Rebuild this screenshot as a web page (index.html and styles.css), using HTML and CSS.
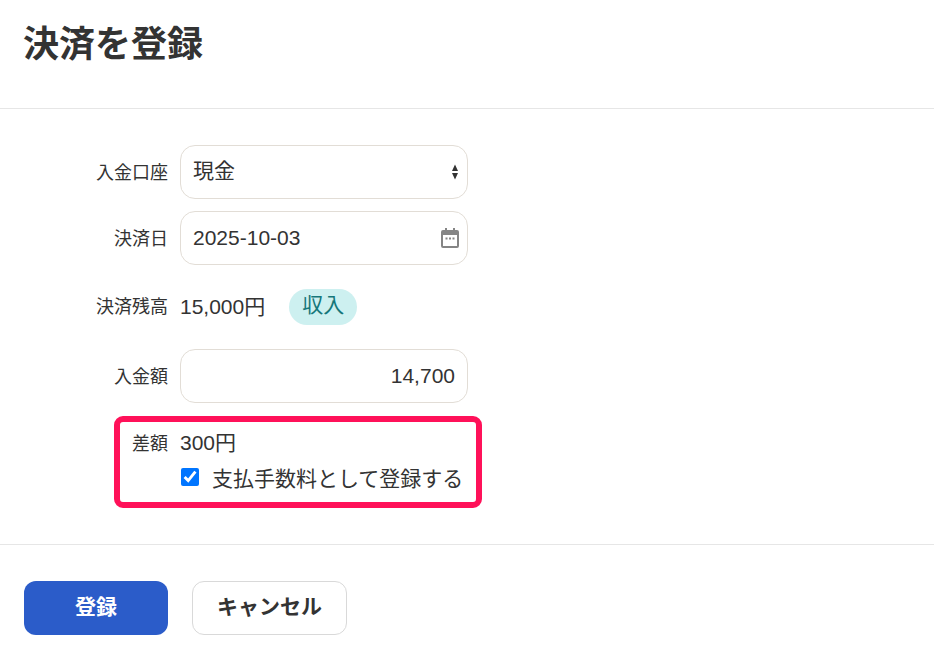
FILE: index.html
```html
<!DOCTYPE html>
<html lang="ja">
<head>
<meta charset="utf-8">
<title>決済を登録</title>
<link rel="stylesheet" href="styles.css">
</head>
<body>
<header class="head"><h1 class="title">決済を登録</h1></header>
<main class="body">
  <form class="form">
    <div class="row">
      <label class="label">入金口座</label>
      <div class="control">
        <select class="field select"><option>現金</option></select>
        <svg class="arrows" width="8" height="18" viewBox="0 0 8 18"><path d="M4 1.500 7 8H1zM1 10h6L4 16.500z" fill="#333"/></svg>
      </div>
    </div>
    <div class="row">
      <label class="label">決済日</label>
      <div class="control">
        <input class="field date" type="text" value="2025-10-03">
        <svg class="calendar" width="18" height="20" viewBox="0 0 18 20"><path fill="#858585" d="M4 0h2v2h6V0h2v2h2a2 2 0 0 1 2 2v14a2 2 0 0 1-2 2H2a2 2 0 0 1-2-2V4a2 2 0 0 1 2-2h2zM2 7v11h14V7zm2.500 2.500h2v2h-2zm3.500 0h2v2H8zm3.500 0h2v2h-2z"/></svg>
      </div>
    </div>
    <div class="row row-balance">
      <span class="label label-balance">決済残高</span>
      <span class="value value-balance">15,000円</span>
      <span class="badge">収入</span>
    </div>
    <div class="row row-amount">
      <label class="label">入金額</label>
      <input class="field amount" type="text" value="14,700">
    </div>
    <div class="highlight">
      <div class="diff">
        <span class="label label-diff">差額</span>
        <span class="value value-diff">300円</span>
      </div>
      <label class="check">
        <input class="checkbox" type="checkbox" checked>
        <span>支払手数料として登録する</span>
      </label>
    </div>
  </form>
</main>
<footer class="foot">
  <button class="btn primary" type="button">登録</button>
  <button class="btn secondary" type="button">キャンセル</button>
</footer>
</body>
</html>
```
FILE: styles.css
```css
* { box-sizing: border-box; }
html, body { margin: 0; background: #fff; }
body {
  font-family: "Liberation Sans", "Noto Sans CJK JP", sans-serif;
  color: #333;
  font-size: 21px;
  height: 659px;
  overflow: hidden;
}
.head { height: 109px; border-bottom: 1px solid #e6e6e6; padding: 19px 24px 0 23px; }
.title { margin: 0; font-size: 36px; line-height: 52px; font-weight: 700; color: #333; }
.body { height: 436px; padding-top: 36px; border-bottom: 1px solid #e6e6e6; }
.form { display: flex; flex-direction: column; }
.row { display: flex; align-items: center; margin-bottom: 12px; }
.label { width: 168px; text-align: right; font-size: 18px; line-height: 24px; flex: none; margin: 2px 12px 0 0; }
.label-balance { margin-top: 0; }
.field {
  display: block; width: 288px; height: 54px; border: 1px solid #e2ddd6; border-radius: 15px;
  background: #fff; font: inherit; color: #333; padding: 0 12px; outline: none;
}
.control { position: relative; width: 288px; height: 54px; }
.select { appearance: none; padding-bottom: 4px; }
.arrows { position: absolute; right: 9px; top: 18px; }
.calendar { position: absolute; right: 9px; top: 17px; }
.row-balance { height: 36px; margin: 12px 0 24px; }
.value { font-size: 21px; line-height: 28px; }
.value-balance { margin-top: -1px; }
.value-diff { margin-top: -1px; }
.badge {
  margin-left: 24px; height: 36px; padding: 0 14px 0 13px; border-radius: 18px;
  background: #cdf0f0; color: #16777a; line-height: 32px; font-size: 21px; width: 68px; white-space: nowrap;
}
.row-amount { margin-bottom: 13px; }
.amount { text-align: right; }
.highlight {
  margin-left: 114px; width: 368px; height: 92px;
  border: 6px solid #ff1159; border-radius: 9px; padding: 4px 0 0;
}
.diff { display: flex; align-items: center; height: 34px; }
.label-diff { width: 48px; margin-right: 12px; }
.check { display: flex; align-items: center; height: 34px; margin-left: 61px; }
.checkbox { width: 18px; height: 18px; margin: 0 13px 0 0; flex: none; }
.foot { display: flex; gap: 24px; padding: 36px 24px 0; }
.btn {
  height: 54px; border-radius: 12px; font: inherit; font-weight: 700; cursor: pointer; padding: 0 0 7px;
}
.primary { width: 144px; background: #2b5cc9; border: 0; color: #fff; }
.secondary { width: 155px; background: #fff; border: 1px solid #d9d9d9; color: #333; }
```
